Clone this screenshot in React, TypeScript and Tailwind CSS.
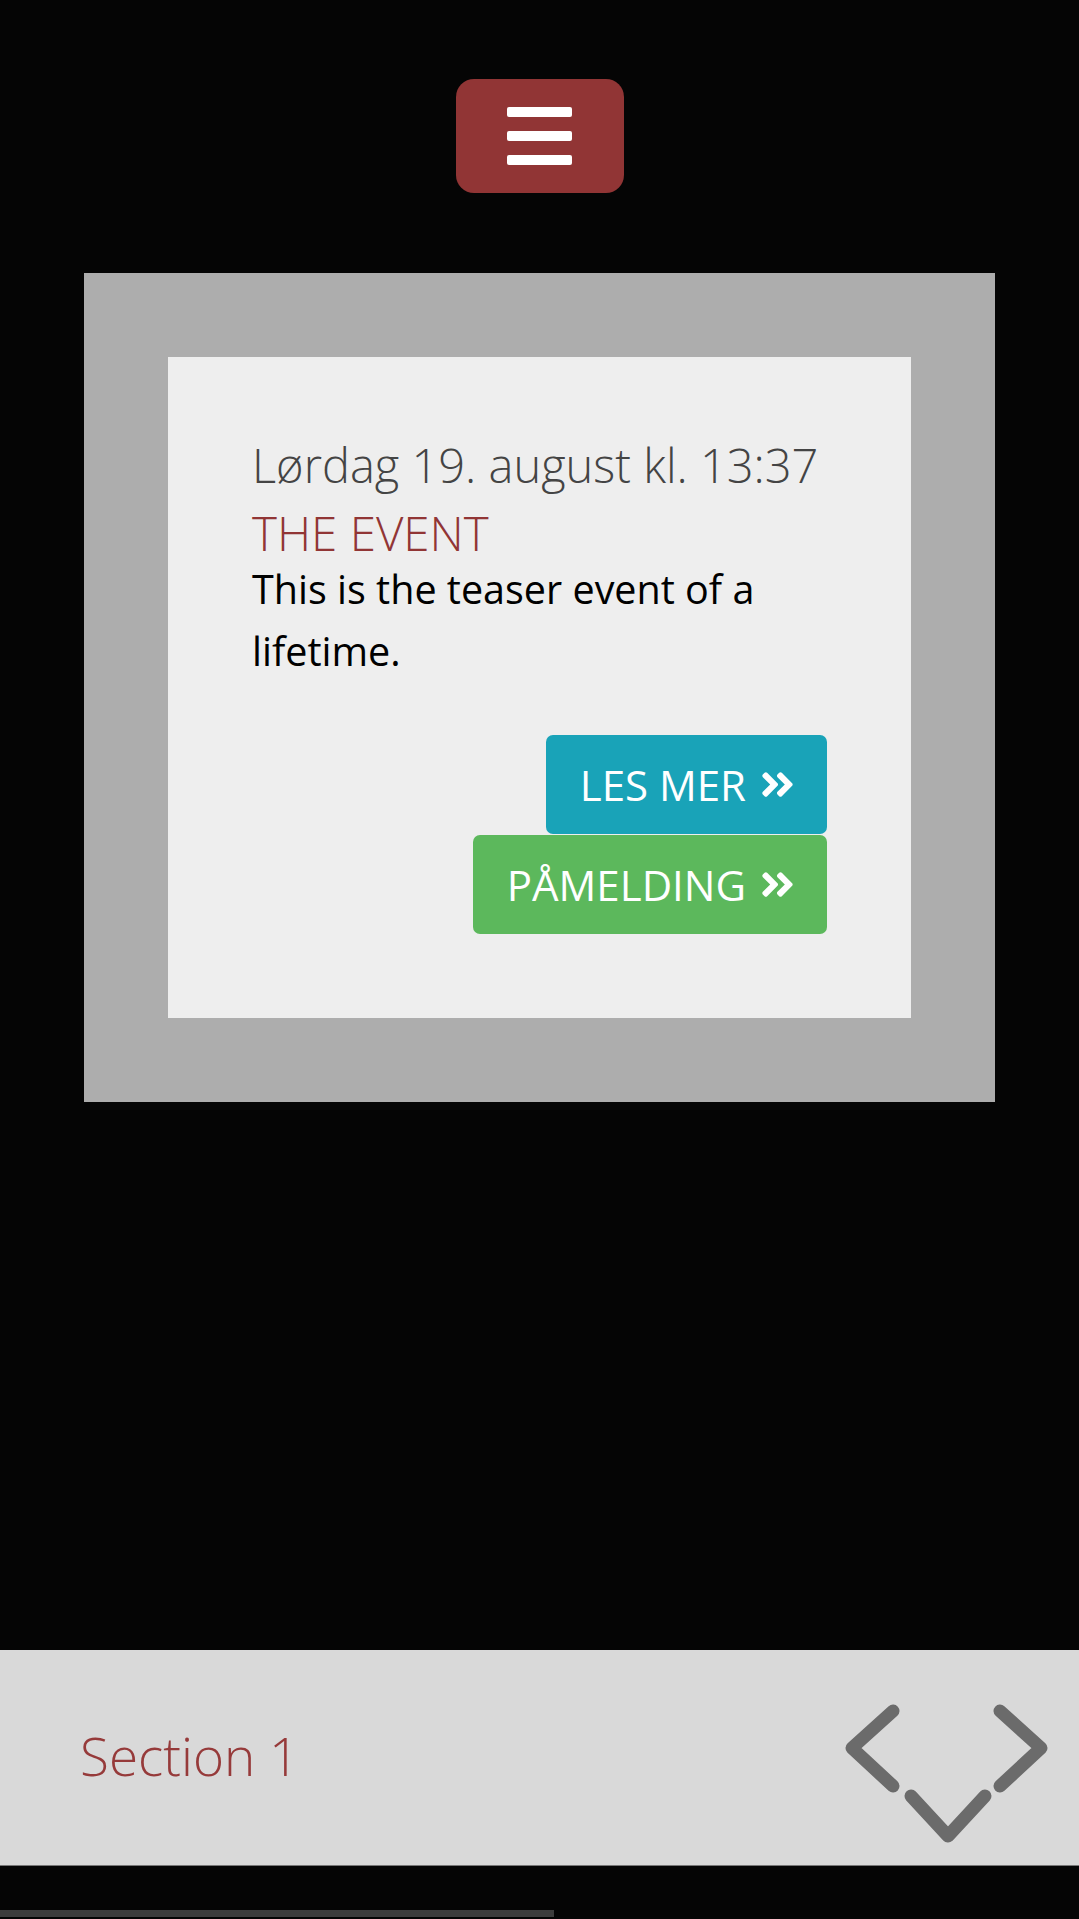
import React from 'react';
import { FaAngleDoubleRight } from 'react-icons/fa';

const font = { fontFamily: '"Open Sans", "Liberation Sans", sans-serif' };

const MenuButton = () => (
  <button className="mx-auto flex h-[114px] w-[168px] flex-col items-center justify-center gap-[14px] rounded-[18px] bg-[#913535]">
    <span className="block h-[10px] w-[65px] rounded-[2px] bg-white" />
    <span className="block h-[10px] w-[65px] rounded-[2px] bg-white" />
    <span className="block h-[10px] w-[65px] rounded-[2px] bg-white" />
  </button>
);

const ActionButton = ({ label, color }: { label: string; color: string }) => (
  <a
    href="#"
    className={`flex h-[99px] items-center gap-[12px] rounded-[7px] pl-[34px] pr-[30px] text-[42px] text-white ${color}`}
  >
    <span>{label}</span>
    <FaAngleDoubleRight size={39} />
  </a>
);

const NavArrows = () => (
  <svg width="220" height="152" viewBox="0 0 220 152" className="mt-[48px]">
    <g fill="none" stroke="#6b6b6b" strokeWidth="13" strokeLinecap="round" strokeLinejoin="round">
      <polyline points="55,13 14,50 55,88" />
      <polyline points="162,13 203,50 162,88" />
      <polyline points="73,98 110,138 147,98" />
    </g>
  </svg>
);

const App = () => {
  return (
    <div className="flex h-[1919px] flex-col overflow-hidden bg-[#050505]" style={font}>
      <header className="pt-[79px]">
        <MenuButton />
      </header>

      <section className="mx-[84px] mt-[80px] bg-[#adadad] p-[84px]">
        <div className="bg-[#eeeeee] px-[84px] pb-[84px] pt-[77px]">
          <p className="text-[47px] font-light leading-[62px] text-[#444444]">Lørdag 19. august kl. 13:37</p>
          <h2 className="mt-[12px] text-[47.5px] font-light leading-[50px] text-[#913535]">THE EVENT</h2>
          <p className="text-[39.5px] leading-[62px] text-black">This is the teaser event of a lifetime.</p>
          <div className="mt-[53px] flex flex-col items-end gap-px">
            <ActionButton label="LES MER" color="bg-[#19a3b8]" />
            <ActionButton label="PÅMELDING" color="bg-[#5cb85c]" />
          </div>
        </div>
      </section>

      <div className="flex-1" />

      <footer className="flex h-[216px] items-start justify-between border-b border-[#777777] bg-[#d9d9d9] pl-[80px] pr-[21px]">
        <span className="mt-[79px] text-[53px] font-light leading-[54px] text-[#963a3a]">Section 1</span>
        <NavArrows />
      </footer>

      <div className="h-[53px] pt-[44px]">
        <div className="h-[7px] w-[554px] bg-[#3c3c3c]" />
      </div>
    </div>
  );
};

export default App;
